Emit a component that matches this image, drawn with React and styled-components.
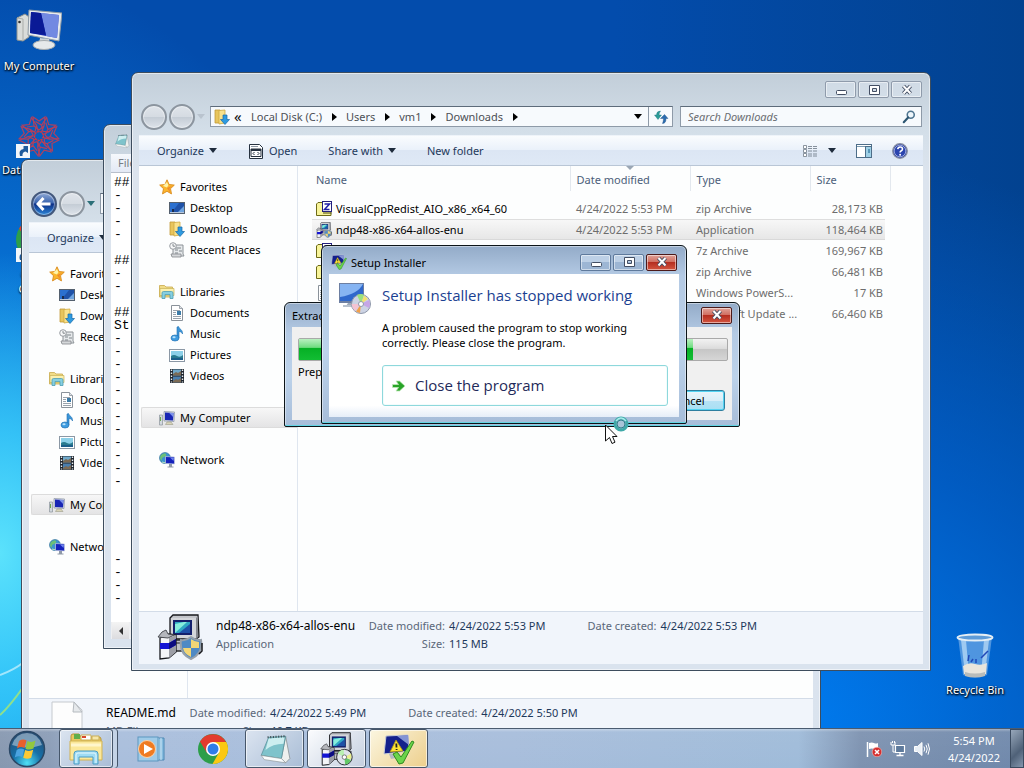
import React from "react";
import styled, { createGlobalStyle, css } from "styled-components";

const GlobalStyle = createGlobalStyle`
  * {
    box-sizing: border-box;
  }
  body {
    margin: 0;
    font-family: "Noto Sans", "Open Sans", sans-serif;
    font-size: 11px;
    line-height: 15px;
    color: #000;
  }
  button, input, textarea {
    font: inherit;
    color: inherit;
    margin: 0;
    padding: 0;
    border: 0;
    background: none;
  }
  a {
    color: inherit;
    text-decoration: none;
  }
  svg {
    display: block;
    flex: none;
  }
`;

/* ---------- icons ---------- */

const Svg = ({ size = 16, box = 16, children }) => (
  <svg width={size} height={size} viewBox={`0 0 ${box} ${box}`} aria-hidden="true">
    {children}
  </svg>
);

const StarIcon = () => (
  <Svg>
    <path d="M8 .8l2.1 4.7 5.2.6-3.8 3.6 1 5.2L8 12.300l-4.500 2.600 1-5.200L.7 6.100l5.200-.6z" fill="#fbb52d" stroke="#d98a1c" strokeWidth=".9" />
    <path d="M8 3l1.400 3.300L8 8.500 4 7z" fill="#fff3a8" />
    <path d="M8 9l5-2-2.500 2.600.7 3.800z" fill="#ee8a2a" />
  </Svg>
);

const ScreenIcon = () => (
  <Svg>
    <rect x="0" y="2" width="16" height="12" fill="#54606e" />
    <rect x="1" y="3" width="14" height="9" fill="#1f52a8" />
    <path d="M1 3h9L3 12H1z" fill="#2b70cf" />
    <path d="M9 12l6-6v6z" fill="#6ea4e0" />
    <rect x="1" y="12" width="14" height="1" fill="#b8c8dc" />
    <rect x="3" y="9" width="2" height="3" fill="#1c2c4c" />
  </Svg>
);

const DownloadsIcon = () => (
  <Svg>
    <path d="M1 1h5l1 13H1z" fill="#e8c55c" stroke="#c29b38" strokeWidth=".8" />
    <path d="M5 1.500l6-.500v13l-6 1z" fill="#f9e28c" stroke="#cfa943" strokeWidth=".8" />
    <path d="M9 6h4v4.500h2.500L11 15.500 6.500 10.500H9z" fill="#2f9be0" stroke="#1769a8" strokeWidth=".7" />
  </Svg>
);

const RecentIcon = () => (
  <Svg>
    <path d="M4 3h10v9l1 2H3l1-3z" fill="#e6e9eb" stroke="#8c9297" />
    <path d="M6 6h6M6 8h3M10 9h3M6 11h3" stroke="#7f868b" />
    <circle cx="4" cy="4" r="3.300" fill="#f6f7f8" stroke="#989da2" />
    <path d="M4 2v2.200h2" stroke="#6b7176" fill="none" strokeWidth=".8" />
    <path d="M2 12h10v3H3z" fill="#d5d8da" stroke="#85898d" strokeWidth=".8" />
  </Svg>
);

const LibrariesIcon = () => (
  <Svg>
    <path d="M.5 3V1.500h5L7 3h6.500v10H.5z" fill="#f1dc87" stroke="#c9a94c" strokeWidth=".8" />
    <path d="M1 4.500h14v7H1z" fill="#fbf0ae" stroke="#c9b158" strokeWidth=".7" />
    <path d="M3 14.500V9q0-1.500 1.500-1.500h8Q14 7.500 14 9v5.500h-3V10.500H6v4z" fill="#86cfe0" stroke="#4d9db4" strokeWidth=".8" />
  </Svg>
);

const DocumentIcon = () => (
  <Svg>
    <path d="M2.500.5h8l3 3v12h-11z" fill="#fff" stroke="#8a929a" />
    <path d="M10.500.5v3h3" fill="#dfe4e8" stroke="#8a929a" strokeWidth=".8" />
    <path d="M4 5.500h7M4 7.500h3M4 9.500h3M4 11.500h8M4 13.500h8" stroke="#9aa3ac" />
    <rect x="8" y="6" width="4" height="4" fill="#3c7ca8" />
  </Svg>
);

const MusicIcon = () => (
  <Svg>
    <path d="M8 1l1.500-.5c.5 2.500 4.500 3 4 7.500-.5-1.500-2-2.500-3.500-2.500V12H8z" fill="#3b95d8" stroke="#2273b5" strokeWidth=".6" />
    <ellipse cx="6" cy="12" rx="4" ry="3" fill="#3f9ce0" stroke="#2273b5" strokeWidth=".7" />
    <ellipse cx="5" cy="11.300" rx="1.600" ry="1" fill="#b8e2fa" />
  </Svg>
);

const PictureIcon = () => (
  <Svg>
    <rect x=".5" y="2.500" width="15" height="12" fill="#fff" stroke="#8b98a5" />
    <rect x="2" y="4" width="12" height="9" fill="#8cd0e8" />
    <path d="M2 9q3-2 6 0t6-1v5H2z" fill="#2a7b8f" />
    <path d="M2 11h12v2H2z" fill="#1c5f8a" />
  </Svg>
);

const VideoIcon = () => (
  <Svg>
    <rect x="1" y="1" width="14" height="14" fill="#20262e" />
    <rect x="4" y="1.500" width="8" height="6" fill="#6fa8c9" />
    <rect x="4" y="8.500" width="8" height="6" fill="#4b7fae" />
    <path d="M4 6l3-2 2 1 3-2v4.500H4zM4 13l3-2 2 1 3-2v4.500H4z" fill="#7c6b55" />
    <path d="M2.500 1.500v13M13.500 1.500v13" stroke="#e8eef2" strokeWidth="1.400" strokeDasharray="1.500 1.500" />
  </Svg>
);

const PcIcon = () => (
  <Svg>
    <path d="M.5 5h3v10h-3z" fill="#d2d8de" stroke="#8b939b" strokeWidth=".7" />
    <path d="M1.500 7v4" stroke="#6aa84a" />
    <path d="M5 1.500l10.500.5-.5 9.500-10-.500z" fill="#d8dde4" stroke="#8a94a3" strokeWidth=".7" />
    <path d="M6 2.500l8.500.500-.500 7.500-8-.500z" fill="#1826b4" />
    <path d="M10 2.700l4.500.3-.400 4z" fill="#7c92ea" />
    <path d="M8 12h4l2 2.500H6.500z" fill="#d9d5b8" stroke="#9a9a88" strokeWidth=".6" />
  </Svg>
);

const NetworkIcon = () => (
  <Svg>
    <circle cx="6" cy="6" r="5.500" fill="#3c93cf" stroke="#2a6c92" strokeWidth=".6" />
    <path d="M2 3q4-3 5-1T5 5 3 8 1 7q0-3 1-4z" fill="#6cc077" />
    <path d="M3 10l4 1" stroke="#bfe7c3" />
    <path d="M6.500 4.500l9 .5v7l-9-.5z" fill="#1522bc" stroke="#c6cfdf" strokeWidth=".7" />
    <path d="M11 5.500l4 .2-.5 3.300z" fill="#6f84ee" />
    <path d="M10 12h3v2.500h1.500v1h-6v-1H10z" fill="#8f99a8" />
  </Svg>
);

const ZipIcon = () => (
  <Svg>
    <path d="M.5 14.500V3l1.500-1.500h4L7.500 3H15v11.500z" fill="#f8f49a" stroke="#6d6a18" />
    <rect x="6.500" y=".5" width="9" height="10" fill="#fff" stroke="#22207c" />
    <path d="M8.500 3h5l-5 5.500h5" stroke="#1f1fa8" strokeWidth="1.500" fill="none" />
    <path d="M7 12h8.500" stroke="#4a4812" />
  </Svg>
);

// old style installer picture: computer, box and a disc or shield
const InstallerIcon = ({ size = 16, disc }) => (
  <Svg size={size} box={46}>
    <path d="M13 4l3-3h25l1 22-3 2H13z" fill="#c3c5ca" stroke="#17181c" strokeWidth="1.300" />
    <path d="M14 4h25v20H14z" fill="#d4d6da" />
    <path d="M39 4l2-2v21l-2 2z" fill="#85878e" />
    <rect x="16" y="6" width="19" height="15" fill="#14206c" />
    <path d="M18 8h15v11H18z" fill="#2fa8c4" />
    <path d="M18 19V10l9-2h3z" fill="#86eedc" />
    <path d="M33 10v9H22z" fill="#1f50a8" />
    <path d="M15 26h27v11H15z" fill="#bfc1c7" stroke="#2b2c31" strokeWidth="1.300" />
    <path d="M17 29h12" stroke="#6b6d74" strokeWidth="2" />
    <path d="M3 24l9-4 7 1v17l-7 6-9 1z" fill="#f4f5f8" stroke="#17181c" strokeWidth="1.300" />
    <path d="M12 24l7-3v17l-7 6z" fill="#9c9ea6" />
    <path d="M3 29h9l7-4v6l-7 4H3z" fill="#1414d4" />
    <path d="M12 29l7-4v6l-7 4z" fill="#0c0c80" />
    <path d="M1 23l4-5 4-2 2 4 6 1-6 3z" fill="#b4b6bc" stroke="#4c4e54" />
    {disc ? (
      <g>
        <circle cx="33" cy="34" r="10.500" fill="#dfe2ea" stroke="#26282c" strokeWidth="1.300" />
        <path d="M33 34l-9-5q3-5 8-5z" fill="#b9f0b1" />
        <path d="M33 34l9 4q-3 6-8 6z" fill="#62c766" />
        <path d="M33 34l9-5q1 4 0 8z" fill="#eaf08c" />
        <circle cx="33" cy="34" r="3" fill="#fff" stroke="#555" />
      </g>
    ) : (
      <g>
        <path d="M34 23q5 4 10 3 2 14-10 19-12-5-10-19 5 1 10-3z" fill="#4f8ac4" stroke="#97a1ab" strokeWidth="2" />
        <path d="M34 25q4 3 8 3v6h-8zM34 34v9q-7-3-8-9z" fill="#f3d675" />
        <path d="M45 29v8l-3 3" stroke="#17181c" strokeWidth="1.500" fill="none" />
      </g>
    )}
  </Svg>
);

const OpenIcon = () => (
  <Svg>
    <path d="M1.500 1.500h10l3 3v11h-13z" fill="#fff" stroke="#26313f" />
    <path d="M3 3.500h7" stroke="#8d97a4" />
    <path d="M3 6h10v7.500H3z" fill="#fff" stroke="#26313f" />
    <path d="M3 6h10v2H3z" fill="#26313f" />
    <path d="M6.500 9L5 10.500 6.500 12M9.500 9l1.500 1.500L9.500 12" stroke="#26313f" fill="none" />
  </Svg>
);

const ViewIcon = () => (
  <Svg>
    <path d="M1.500 2.500h3v3h-3zM1.500 6.500h3v3h-3zM1.500 10.500h3v3h-3z" fill="#fff" stroke="#707b88" strokeWidth=".8" />
    <path d="M6 3.500h10M6 5.500h10M6 8h10M6 11h10M6 13h10" stroke="#6b7684" strokeDasharray="4 1" strokeWidth=".8" />
  </Svg>
);

const PaneIcon = () => (
  <Svg>
    <rect x=".5" y="1.500" width="15" height="13" fill="#fff" stroke="#4d6d88" />
    <path d="M1 3.500h14" stroke="#7b9ab0" />
    <rect x="9.500" y="3.500" width="6" height="11" fill="#9fd0e6" stroke="#4d6d88" />
    <path d="M12 6h2v4h-2z" fill="#5796b8" />
  </Svg>
);

const HelpIcon = () => (
  <Svg>
    <circle cx="8" cy="8" r="7.300" fill="#2b44ae" stroke="#8a90a0" strokeWidth="1.300" />
    <circle cx="8" cy="8" r="5.800" fill="none" stroke="#c5cfec" strokeWidth=".7" />
    <path d="M5.700 6.200Q6 4 8.200 4t2.300 2Q10.500 7.200 9 8q-.9.500-.9 1.500" stroke="#fff" strokeWidth="1.600" fill="none" />
    <circle cx="8.100" cy="11.700" r="1" fill="#fff" />
  </Svg>
);

const SearchIcon = () => (
  <Svg size={14}>
    <circle cx="10" cy="5.500" r="4" fill="#eef6fb" stroke="#4f7590" strokeWidth="1.800" />
    <path d="M7 8.500L2 14" stroke="#2d5672" strokeWidth="2.400" strokeLinecap="round" />
  </Svg>
);

const RefreshIcon = () => (
  <Svg>
    <path d="M7.500 2Q3.500 2 3.500 6H1.500L5 10.500 8.500 6H6q0-2 1.500-4z" fill="#2b9d96" stroke="#1b6c86" strokeWidth=".4" />
    <path d="M9.500 14.500q3.500 0 3.500-5h2L11.500 5.500 7.500 9.500h3q0 3-1 5z" fill="#2a6cae" stroke="#1b4c86" strokeWidth=".4" />
  </Svg>
);

const NotepadIcon = ({ size = 16 }) => (
  <Svg size={size} box={32}>
    <path d="M26 4l4 21-4 4-4-4z" fill="#eef0ee" stroke="#8c9698" strokeWidth=".8" />
    <path d="M10 5l16-1-4 21-19-3z" fill="#7fc3cb" stroke="#568f98" strokeWidth=".7" />
    <path d="M10 6l15-1-1 6Q14 11 7 17z" fill="#cdeef0" />
    <path d="M9 5l17-1" stroke="#3f4c52" strokeWidth="2" strokeDasharray="1 1.500" />
    <path d="M3 22l19 3 4 4-20-3z" fill="#fafcfc" stroke="#8a9496" strokeWidth=".6" />
  </Svg>
);

const BlankFileIcon = () => (
  <Svg size={40} box={40}>
    <path d="M5 1h22l8 8v30H5z" fill="#fdfdfd" stroke="#c5c9ce" />
    <path d="M27 1l-1 10h9z" fill="#e6e9ec" stroke="#b5babf" />
  </Svg>
);

const SetupIcon = ({ size = 16 }) => (
  <Svg size={size} box={32}>
    <path d="M3 3l22-1 1 16-25 3z" fill="#14208c" stroke="#c6cbd6" strokeWidth="1" />
    <path d="M14 3l11-1 1 10z" fill="#8494d4" />
    <path d="M6 21l10-1 2 4-10 2z" fill="#b4b8c0" />
    <path d="M13 7l7 11-13 1z" fill="#fde334" stroke="#a58b12" strokeWidth=".8" />
    <path d="M13.300 10.500l.2 4M13.600 16v1" stroke="#222" strokeWidth="1.800" />
    <path d="M10 21l4-2 4 5L29 8l2 1-11 21-4 1z" fill="#6bd44a" stroke="#2e8a20" />
  </Svg>
);

const SetupDiscIcon = () => (
  <Svg size={34} box={34}>
    <rect x="1" y="1" width="25" height="20" fill="#6d7fa2" />
    <rect x="2" y="2" width="23" height="17" fill="#2f68cc" />
    <path d="M2 2h23Q20 12 2 15z" fill="#86b4f2" />
    <path d="M10 21h7l1 3H8z" fill="#9da8b8" />
    <path d="M5 24h15" stroke="#b9c2ce" strokeWidth="2" />
    <circle cx="23" cy="22" r="9.500" fill="#ccd3e4" stroke="#8f98aa" />
    <path d="M23 22l-4-9q4-2 7 0z" fill="#9ae07f" />
    <path d="M23 22l8-4q2 4 0 8z" fill="#c6a6e6" />
    <path d="M23 22l3-8.500 4 3.500z" fill="#f3e270" />
    <path d="M23 22l-6 7q-3-3-3.500-7z" fill="#f4c3d2" />
    <path d="M23 22l-5 7.500 4 1.500z" fill="#f2a04a" />
    <circle cx="23" cy="22" r="2.500" fill="#fff" stroke="#8f98aa" />
  </Svg>
);

const GreenArrowIcon = () => (
  <Svg>
    <path d="M1.500 6.500h6L5 3h3.500L14 8l-5.500 5H5l2.500-3.500h-6z" fill="#28a428" stroke="#bfe9b8" strokeWidth=".8" />
  </Svg>
);

const ComputerBig = () => (
  <Svg size={46} box={46}>
    <path d="M1 9l8-4 4 3v20l-6 4-6-1z" fill="#d9dcda" stroke="#90938f" />
    <path d="M1 9l6 1v22" fill="none" stroke="#a9aca9" />
    <circle cx="3.500" cy="13" r="1.300" fill="#333" />
    <path d="M13 1l33 3-3 28-31-6z" fill="#e7ebee" stroke="#8e9aa5" />
    <path d="M15 3l28 3-2 23-27-5z" fill="#1327b4" />
    <path d="M25 4l18 2-2 23-11-2z" fill="#8ba3ee" opacity=".8" />
    <path d="M15 3l10 1 5 22-16-2z" fill="#0a1a96" />
    <path d="M24 29l9 1 1 5H23z" fill="#cdd3d6" />
    <ellipse cx="28" cy="36" rx="11" ry="4.500" fill="#e6e9ea" stroke="#a4aaad" />
  </Svg>
);

const Rosette = () => (
  <Svg size={46} box={46}>
    <g fill="none" stroke="#b0405e" strokeWidth="1.200">
      {[0, 40, 80, 120, 160, 200, 240, 280, 320].map((a) => (
        <path key={a} d="M23 17l-5-4-1-9 6 4 6-4-1 9-5 4M18 13l-7 1M28 13l-3 7" transform={`rotate(${a} 23 23)`} />
      ))}
      <circle cx="23" cy="23" r="4.500" strokeDasharray="2 1" stroke="#e03038" />
    </g>
  </Svg>
);

const ShortcutIcon = () => (
  <Svg size={14} box={14}>
    <rect width="14" height="14" fill="#f2f6fa" />
    <path d="M4 12Q2 6 7.500 5V2H12v7L9.500 7.500Q6 8 6.500 12z" fill="#1f5b9c" />
  </Svg>
);

const RecycleIcon = () => (
  <Svg size={48} box={48}>
    <path d="M7 5h34l-5 38q-12 5-24 0z" fill="#6aa6e4" opacity=".75" />
    <path d="M10 8l4 34 4 1-3-35zM38 8l-4 34-4 1 3-35z" fill="#d6ecfb" opacity=".6" />
    <path d="M12 34q6-4 12-2t12-1l-1 11q-11 4-22 0z" fill="#e9e5dc" />
    <path d="M14 40q10 3 20 0v4q-10 3-20 0z" fill="#b9bcba" />
    <path d="M17 29l1-6M20 30l2-3M25 31v-4M30 26l7-7" stroke="#2148b8" strokeWidth="1.500" fill="none" />
    <ellipse cx="24" cy="5.500" rx="17.500" ry="3" fill="#5d9bd8" stroke="#e4eef5" strokeWidth="1.800" />
  </Svg>
);

const StartOrb = () => (
  <Svg size={38} box={38}>
    <defs>
      <radialGradient id="orb" cx=".5" cy=".9" r=".9">
        <stop offset="0" stopColor="#4fe0f5" />
        <stop offset=".45" stopColor="#1670a8" />
        <stop offset="1" stopColor="#264a70" />
      </radialGradient>
    </defs>
    <circle cx="19" cy="19" r="17.500" fill="url(#orb)" stroke="#2a4866" strokeWidth="1.500" />
    <path d="M4 15Q8 3 19 3t15 12Q19 20 4 15z" fill="#b6cbdc" opacity=".6" />
    <path d="M11 11q4-2.500 7.500-.500l-2 7.500q-3.500-2-7.500.500z" fill="#e9602c" />
    <path d="M19.500 11q4 2 8-.500l-2 8q-4 2-8 .200z" fill="#93c83e" />
    <path d="M8.700 20q4-2.500 7.500-.500l-2 7.500q-3.500-1.800-7.500.500z" fill="#4ba3e0" />
    <path d="M17.200 20q4 2 8-.200l-2 8q-4 2-8 0z" fill="#fbc936" />
  </Svg>
);

const FolderBig = () => (
  <Svg size={34} box={34}>
    <path d="M2 4q0-2 2-2h6l2 3h18q2 0 2 2v20H2z" fill="#e8c860" stroke="#b99535" />
    <path d="M5 2h6v5H5z" fill="#5fae4a" />
    <path d="M12 3h10v5H12z" fill="#fff" stroke="#c9ae58" />
    <path d="M13 4h4v2h-4z" fill="#d8482e" />
    <path d="M23 4h7v4h-7z" fill="#f6e7a8" stroke="#c9ae58" />
    <path d="M1 9h32v19H1z" fill="#fbe89a" stroke="#d2b352" />
    <path d="M2 13h30" stroke="#fff6cc" strokeWidth="3" />
    <path d="M5 32V22q0-3 3-3h18q3 0 3 3v10h-5v-7H10v7z" fill="#9fdcf4" stroke="#4a9cc4" />
    <path d="M7 31v-8q0-2 2-2h16q2 0 2 2v8" fill="none" stroke="#e4f7fd" />
  </Svg>
);

const PlayerIcon = () => (
  <Svg size={28} box={28}>
    <path d="M19 3h8v22h-8z" fill="#86bcdf" stroke="#4d88b4" />
    <path d="M21 3v22M24 3v22" stroke="#d0e8f6" />
    <rect x="1" y="2" width="20" height="24" fill="#9fcbe8" stroke="#5d97bf" />
    <circle cx="10" cy="14" r="8.500" fill="#ef7b22" stroke="#fbd2a8" />
    <path d="M7 9l9 5-9 5z" fill="#fff" />
  </Svg>
);

const ChromeIcon = ({ size = 30 }) => (
  <Svg size={size} box={30}>
    <circle cx="15" cy="15" r="15" fill="#2d9e49" />
    <path d="M2 7.500A15 15 0 0 1 28 8H15l-6 11z" fill="#e23b2e" />
    <path d="M15 8h13.300A15 15 0 0 1 14.500 30L21 18.500z" fill="#fbc813" />
    <circle cx="15" cy="15" r="7" fill="#fff" />
    <circle cx="15" cy="15" r="5.500" fill="#2f7de8" />
  </Svg>
);

const FlagIcon = () => (
  <Svg>
    <path d="M1.500 1v15" stroke="#fff" strokeWidth="1.500" />
    <path d="M3 2q3-1 5 0t4 0v6q-2 1-4 0t-5 0z" fill="#fff" />
    <circle cx="11" cy="11" r="4.800" fill="#d62f2f" stroke="#f3c5c0" strokeWidth=".6" />
    <path d="M9 9l4 4M13 9l-4 4" stroke="#fff" strokeWidth="1.500" />
  </Svg>
);

const WiredIcon = () => (
  <Svg>
    <path d="M5.500 4.500h9v7h-9z" fill="#5e7a9c" stroke="#fff" strokeWidth="1.200" />
    <path d="M10 12v2M6.500 14.500h7" stroke="#fff" strokeWidth="1.300" />
    <path d="M1 1v3h4V1M3 4v7h2M2.500 0v2M4.500 0v2" stroke="#fff" fill="none" />
  </Svg>
);

const SpeakerIcon = () => (
  <Svg>
    <path d="M.5 5.500h3L8 1.500v13l-4.500-4h-3z" fill="#e8eef5" stroke="#fff" />
    <path d="M10 5.500q1.500 2.500 0 5M12 3.800q2.500 4.200 0 8.400M14 2.300q3 5.700 0 11.400" stroke="#fff" fill="none" />
  </Svg>
);

const MinGlyph = () => (
  <Svg size={12} box={12}>
    <rect x="1.500" y="6.500" width="10" height="4" rx="1" fill="#fff" stroke="#434e63" />
  </Svg>
);

const MaxGlyph = () => (
  <Svg size={12} box={12}>
    <path fillRule="evenodd" d="M1.500 1.500h10v9h-10zM4.500 4.500v3h4v-3z" fill="#fff" stroke="#434e63" />
  </Svg>
);

const CloseGlyph = () => (
  <Svg size={12} box={12}>
    <path d="M2.500 2l7 7.500M9.500 2l-7 7.500" stroke="#434e63" strokeWidth="4" />
    <path d="M2.500 2l7 7.500M9.500 2l-7 7.500" stroke="#fff" strokeWidth="2" />
  </Svg>
);

/* ---------- desktop ---------- */

const Screen = styled.div`
  display: flex;
  flex-direction: column;
  height: 100vh;
  overflow: hidden;
`;

const Desktop = styled.main`
  position: relative;
  flex: 1;
  overflow: hidden;
  background:
    radial-gradient(ellipse 180px 300px at 0 76%, #5be2fc 0, rgba(60, 204, 250, 0.85) 40%, transparent 100%),
    radial-gradient(ellipse 420px 680px at 0 90%, #10aaf4 0, rgba(8, 130, 230, 0.75) 50%, transparent 100%),
    radial-gradient(ellipse 640px 580px at 76% 100%, #007cf0 0, rgba(0, 104, 218, 0.65) 50%, transparent 100%),
    linear-gradient(90deg, #034cac, #034cac 60%, #024290);
`;

const Streaks = styled.svg`
  position: absolute;
  left: 0;
  bottom: 0;
`;

const Shortcut = styled.a`
  position: absolute;
  left: ${(p) => p.$x}px;
  top: ${(p) => p.$y}px;
  width: 76px;
  display: flex;
  flex-direction: column;
  align-items: center;
  gap: 2px;
  color: #fff;
  text-align: center;
  text-shadow: 1px 1px 2px #000, 0 1px 2px #000;
`;

const ShortcutPicture = styled.span`
  display: flex;
  align-items: center;
  height: 48px;
`;

const ShortcutArrow = styled.span`
  position: absolute;
  left: 15px;
  top: 32px;
`;

/* ---------- windows ---------- */

const Window = styled.section`
  position: absolute;
  left: ${(p) => p.$x}px;
  top: ${(p) => p.$y}px;
  width: ${(p) => p.$w}px;
  height: ${(p) => p.$h}px;
  display: flex;
  flex-direction: column;
  padding: 0 7px 6px;
  border: 1px solid #3d4d5e;
  border-radius: 7px 7px 0 0;
  background: linear-gradient(180deg, #c2ced9 0, #d4dfe9 60px, #dce4ee 100px, #dae3ee 100%);
  box-shadow: inset 0 0 0 1px rgba(255, 255, 255, 0.55);
`;

const Dialog = styled(Window)`
  border-color: #0c1418;
  border-radius: 6px 6px 2px 2px;
  background: linear-gradient(180deg, #93abc8 0, #b4cae4 30px, #bcd2ea 60%, #a7bdd9 100%);
  box-shadow: inset 0 -1px 0 #62d5e4, inset 0 0 0 1px rgba(255, 255, 255, 0.45);
`;

const CaptionButtons = styled.div`
  display: flex;
  gap: 2px;
  margin-left: auto;
`;

const CaptionButton = styled.button`
  width: 31px;
  height: 17px;
  display: flex;
  align-items: center;
  justify-content: center;
  border: 1px solid ${(p) => (p.$active ? "#5f7a9c" : "#8f9bab")};
  border-radius: 2px;
  background: ${(p) => (p.$active ? "linear-gradient(#bdd0e6 50%, #9db6d4 50%)" : "rgba(225, 234, 244, 0.4)")};
  box-shadow: inset 0 0 0 1px rgba(255, 255, 255, 0.5);
  ${(p) =>
    p.$red &&
    css`
      border-color: #4c1a1a;
      background: linear-gradient(#e0a298 0, #cf6a5c 50%, #b52e20 50%, #d4553f 100%);
    `}
`;

const Caption = ({ active, only }) => (
  <CaptionButtons>
    {!only && (
      <CaptionButton type="button" aria-label="Minimize" $active={active}>
        <MinGlyph />
      </CaptionButton>
    )}
    {!only && (
      <CaptionButton type="button" aria-label="Maximize" $active={active}>
        <MaxGlyph />
      </CaptionButton>
    )}
    <CaptionButton type="button" aria-label="Close" $active={active} $red={active || only}>
      <CloseGlyph />
    </CaptionButton>
  </CaptionButtons>
);

/* ---------- explorer ---------- */

const ExplorerTitle = styled.header`
  display: flex;
  height: 33px;
  padding: 8px 1px 0 0;
`;

const NavBar = styled.div`
  display: flex;
  align-items: center;
  height: 21px;
  margin-bottom: 8px;
`;

const TravelButtons = styled.div`
  display: flex;
  align-items: center;
  gap: 2px;
  width: 71px;
  padding-left: 2px;
`;

const TravelButton = styled.button`
  width: 26px;
  height: 26px;
  flex: none;
  display: flex;
  align-items: center;
  justify-content: center;
  border: 2px solid ${(p) => (p.$on ? "#43587c" : "#8c959f")};
  border-radius: 50%;
  background: ${(p) =>
    p.$on ? "linear-gradient(#8fa9d6 0, #3a64ae 45%, #0c2f86 50%, #2c86d8 100%)" : "linear-gradient(#dfe4ea 0, #d5dbe2 50%, #c4ccd5 50%, #dde3ea 100%)"};
  box-shadow: inset 0 0 0 1px rgba(255, 255, 255, 0.4);
`;

const Triangle = styled.span`
  width: 0;
  height: 0;
  flex: none;
  border: 4px solid transparent;
  ${(p) =>
    p.$right
      ? css`
          border-left: 5px solid #000;
          border-right: 0;
        `
      : css`
          border-top: 5px solid ${p.$color || "#1e2b3c"};
          border-bottom: 0;
        `}
`;

const AddressBar = styled.div`
  flex: 1;
  display: flex;
  align-items: center;
  height: 21px;
  padding-left: 3px;
  border: 1px solid #8e9aa8;
  border-top-color: #5d6b7a;
  background: #f7fafd;
  color: #4c4f55;
`;

const Crumb = styled.a`
  display: flex;
  align-items: center;
  gap: 10px;
  margin-right: 9px;
  white-space: nowrap;
`;

const Chevrons = styled.span`
  width: 21px;
  padding-left: 4px;
  color: #111;
  font-size: 15px;
`;

const AddressEnd = styled.div`
  display: flex;
  align-items: center;
  gap: 6px;
  height: 100%;
  margin-left: auto;
`;

const RefreshButton = styled.button`
  width: 24px;
  height: 100%;
  display: flex;
  align-items: center;
  justify-content: center;
  border-left: 1px solid #8e9aa8;
`;

const SearchBox = styled.label`
  display: flex;
  align-items: center;
  width: 242px;
  height: 21px;
  margin: 0 1px 0 7px;
  padding: 0 5px 0 7px;
  border: 1px solid #8e9aa8;
  border-top-color: #5d6b7a;
  background: #f7fafd;

  input {
    flex: 1;
    min-width: 0;
    font-style: italic;
    outline: none;
  }
  input::placeholder {
    color: #6a6d72;
    opacity: 1;
  }
`;

const Toolbar = styled.div`
  display: flex;
  align-items: center;
  height: 31px;
  padding: 0 15px 0 18px;
  border: 1px solid #b9c6d6;
  border-width: 1px 0;
  border-top-color: #eef3f9;
  background: linear-gradient(#fafcfe 0, #eaf1fa 48%, #dce6f4 50%, #dfe9f6 100%);
  color: #1e395b;
`;

const ToolButton = styled.button`
  display: flex;
  align-items: center;
  gap: 5px;
  margin-right: 31px;
  white-space: nowrap;
`;

const ToolEnd = styled.div`
  display: flex;
  align-items: center;
  gap: 20px;
  margin-left: auto;
`;

const ViewButton = styled.button`
  display: flex;
  align-items: center;
  gap: 10px;
`;

const Body = styled.div`
  flex: 1;
  min-height: 0;
  display: flex;
  background: #fdfefe;
`;

const NavPane = styled.nav`
  width: 159px;
  padding: 10px 0 0 2px;
  border-right: 1px solid #dfe6ef;
`;

const NavItem = styled.a`
  display: flex;
  align-items: center;
  gap: 5px;
  height: 21px;
  margin-bottom: ${(p) => (p.$last ? 21 : 0)}px;
  padding-left: ${(p) => (p.$child ? 27 : 17)}px;
  white-space: nowrap;
  border: 1px solid transparent;
  border-right: 0;
  ${(p) =>
    p.$selected &&
    css`
      border-color: #dcdcdc;
      border-radius: 2px 0 0 2px;
      background: linear-gradient(#f7f7f7, #e4e4e5);
    `}
`;

const ListPane = styled.div`
  flex: 1;
  padding-left: 14px;
  overflow: hidden;
`;

const FileTable = styled.table`
  width: 578px;
  table-layout: fixed;
  border-collapse: collapse;

  th, td {
    padding: 0 6px;
    font-weight: 400;
    text-align: left;
    white-space: nowrap;
    color: #6d6d6d;
  }
  th {
    height: 25px;
    padding-top: 2px;
    border-right: 1px solid #e3e8ee;
    color: #4c607a;
  }
  th:first-child, td:first-child {
    padding-left: 4px;
  }
  td {
    height: 21px;
  }
  td:last-child {
    padding: 0;
  }
  td:nth-child(4) {
    padding: 0 2px 0 0;
    text-align: right;
  }
  tbody::before {
    content: "";
    display: block;
    height: 7px;
  }
`;

const FileRow = styled.tr`
  ${(p) =>
    p.$selected &&
    css`
      td:not(:last-child) {
        background: linear-gradient(#f8f8f8, #e6e6e6);
        box-shadow: inset 0 1px 0 #dedede, inset 0 -1px 0 #d9d9d9;
      }
    `}
`;

const SortHead = styled.th`
  position: relative;

  &::after {
    content: "";
    position: absolute;
    left: 50%;
    top: 0;
    margin-left: -4px;
    border: 4px solid transparent;
    border-top-color: #9aa6b4;
    border-bottom: 0;
  }
`;

const FileName = styled.span`
  display: flex;
  align-items: center;
  gap: 4px;
  color: #000;
`;

const Details = styled.footer`
  display: flex;
  height: 53px;
  padding: 2px 0 0 18px;
  border-top: 1px solid #d3dce8;
  background: #f1f5fb;
`;

const DetailsIcon = styled.div`
  width: 59px;
`;

const DetailsGrid = styled.dl`
  display: grid;
  grid-template-columns: auto auto auto;
  grid-template-rows: 18px 18px;
  align-items: center;
  align-self: start;
  column-gap: 10px;
  margin: 2px 0 0;
  white-space: nowrap;
`;

const Pair = styled.div`
  display: grid;
  grid-template-columns: ${(p) => p.$label}px auto;
  gap: 4px;
  margin-right: ${(p) => p.$after || 0}px;

  dt {
    text-align: right;
    color: #5a6779;
  }
  dd {
    margin: 0;
    color: #1e395b;
  }
`;

const DetailsName = styled.dt`
  font-size: 12px;
`;

const DetailsKind = styled.dd`
  margin: 0;
  color: #5a6779;
`;

const navItems = [
  { name: "Favorites", icon: StarIcon },
  { name: "Desktop", icon: ScreenIcon, child: true },
  { name: "Downloads", icon: DownloadsIcon, child: true },
  { name: "Recent Places", icon: RecentIcon, child: true, last: true },
  { name: "Libraries", icon: LibrariesIcon },
  { name: "Documents", icon: DocumentIcon, child: true },
  { name: "Music", icon: MusicIcon, child: true },
  { name: "Pictures", icon: PictureIcon, child: true },
  { name: "Videos", icon: VideoIcon, child: true, last: true },
  { name: "My Computer", icon: PcIcon, selected: true, last: true },
  { name: "Network", icon: NetworkIcon },
];

const files = [
  { name: "VisualCppRedist_AIO_x86_x64_60", type: "zip Archive", size: "28,173 KB", icon: ZipIcon },
  { name: "ndp48-x86-x64-allos-enu", type: "Application", size: "118,464 KB", icon: InstallerIcon, selected: true },
  { name: "", type: "7z Archive", size: "169,967 KB", icon: ZipIcon },
  { name: "", type: "zip Archive", size: "66,481 KB", icon: ZipIcon },
  { name: "", type: "Windows PowerS...", size: "17 KB", icon: DocumentIcon },
  { name: "", type: "Microsoft Update ...", size: "66,460 KB", icon: DocumentIcon },
];

const Explorer = ({ x, y, canGoBack, path, search, rows = [], details }) => (
  <Window $x={x} $y={y} $w={800} $h={599}>
    <ExplorerTitle>
      <Caption />
    </ExplorerTitle>
    <NavBar>
      <TravelButtons>
        <TravelButton type="button" aria-label="Back" $on={canGoBack}>
          {canGoBack && (
            <Svg>
              <path d="M7.500 2L2 8l5.500 6M2 8h12.500" stroke="#fff" strokeWidth="3" fill="none" />
            </Svg>
          )}
        </TravelButton>
        <TravelButton type="button" aria-label="Forward" />
        <Triangle $color={canGoBack ? "#2c6f78" : "#b9c3ce"} />
      </TravelButtons>
      <AddressBar>
        <DownloadsIcon />
        <Chevrons>«</Chevrons>
        {path.map((p) => (
          <Crumb href="#" key={p}>
            {p}
            <Triangle $right />
          </Crumb>
        ))}
        <AddressEnd>
          <Triangle $color="#000" />
          <RefreshButton type="button" aria-label="Refresh">
            <RefreshIcon />
          </RefreshButton>
        </AddressEnd>
      </AddressBar>
      <SearchBox>
        <input type="text" placeholder={search} aria-label={search} />
        <SearchIcon />
      </SearchBox>
    </NavBar>
    <Toolbar>
      <ToolButton type="button">
        Organize <Triangle />
      </ToolButton>
      <ToolButton type="button">
        <OpenIcon /> Open
      </ToolButton>
      <ToolButton type="button">
        Share with <Triangle />
      </ToolButton>
      <ToolButton type="button">New folder</ToolButton>
      <ToolEnd>
        <ViewButton type="button" aria-label="Change your view">
          <ViewIcon />
          <Triangle />
        </ViewButton>
        <button type="button" aria-label="Show the preview pane">
          <PaneIcon />
        </button>
        <button type="button" aria-label="Help">
          <HelpIcon />
        </button>
      </ToolEnd>
    </Toolbar>
    <Body>
      <NavPane>
        {navItems.map(({ name, icon: Icon, child, last, selected }) => (
          <NavItem href="#" key={name} $child={child} $last={last} $selected={selected}>
            <Icon /> {name}
          </NavItem>
        ))}
      </NavPane>
      <ListPane>
        {rows.length > 0 && (
          <FileTable>
            <colgroup>
              <col width="258" />
              <col width="120" />
              <col width="120" />
              <col width="75" />
              <col width="5" />
            </colgroup>
            <thead>
              <tr>
                <th>Name</th>
                <SortHead>Date modified</SortHead>
                <th>Type</th>
                <th colSpan="2">Size</th>
              </tr>
            </thead>
            <tbody>
              {rows.map(({ name, type, size, icon: Icon, selected }) => (
                <FileRow key={type + size} $selected={selected}>
                  <td>
                    <FileName>
                      <Icon /> {name}
                    </FileName>
                  </td>
                  <td>4/24/2022 5:53 PM</td>
                  <td>{type}</td>
                  <td>{size}</td>
                  <td />
                </FileRow>
              ))}
            </tbody>
          </FileTable>
        )}
      </ListPane>
    </Body>
    <Details>
      <DetailsIcon>{details.icon}</DetailsIcon>
      <DetailsGrid>
        <DetailsName>{details.name}</DetailsName>
        <Pair $label={80} $after={32}>
          <dt>Date modified:</dt>
          <dd>{details.modified}</dd>
        </Pair>
        <Pair $label={69}>
          <dt>Date created:</dt>
          <dd>{details.created}</dd>
        </Pair>
        <DetailsKind>{details.kind}</DetailsKind>
        <Pair $label={80}>
          <dt>Size:</dt>
          <dd>{details.size}</dd>
        </Pair>
      </DetailsGrid>
    </Details>
  </Window>
);

/* ---------- notepad ---------- */

const NoteTitle = styled.header`
  height: 29px;
  padding: 8px 3px 0;
`;

const NoteMenu = styled.div`
  height: 19px;
  padding: 1px 7px;
  background: linear-gradient(#f5f8fc, #e3e9f5);
  border-bottom: 1px solid #b8bfcb;
  color: #777c84;
`;

const NoteText = styled.textarea`
  flex: 1;
  padding: 3px 3px 0;
  background: #fff;
  font-family: "Liberation Mono", monospace;
  font-size: 13px;
  line-height: 13px;
  resize: none;
  outline: none;
  overflow: hidden;
`;

const NoteScroll = styled.div`
  height: 17px;
  margin-bottom: 3px;
  padding-left: 1px;
  background: #eeeff1;

  button {
    width: 17px;
    height: 17px;
    display: flex;
    align-items: center;
    justify-content: center;
    background: linear-gradient(#f4f4f4, #dcdcdf);
  }
`;

const noteLines = [
  "##", "-", "-", "-", "-", "",
  "##", "-", "-", "",
  "##", "St", ...Array(12).fill("-"),
  "", "", "", "", "",
  "-", "-", "-", "-",
];

/* ---------- dialogs ---------- */

const DialogTitle = styled.header`
  display: flex;
  align-items: center;
  gap: 4px;
  height: ${(p) => p.$h}px;
  padding: ${(p) => (p.$icon ? "4px 2px 0" : "0")};
`;

const ExtractBody = styled.div`
  flex: 1;
  display: flex;
  flex-direction: column;
  gap: 3px;
  padding: 11px 4px 9px 6px;
  background: #f0f0f0;
`;

const Progress = styled.div`
  height: 23px;
  border: 1px solid #a9a9a9;
  border-radius: 2px;
  background: linear-gradient(#f2f2f2 0, #dcdcdc 45%, #c6c6c6 50%, #d6d6d6 100%);
`;

const ProgressFill = styled.div`
  height: 100%;
  background: linear-gradient(#b9f0c0 0, #6fdc80 40%, #06b025 45%, #12bd33 100%);
`;

const CancelButton = styled.button`
  width: 75px;
  height: 21px;
  margin: auto 3px 0 auto;
  border: 1px solid #2f7f9f;
  border-radius: 3px;
  background: linear-gradient(#eaf5fb 0, #d9eef8 50%, #b7e2f5 50%, #a8e0f4 100%);
  box-shadow: inset 0 0 0 1px #55d3f2;
`;

const CrashBody = styled.div`
  flex: 1;
  display: grid;
  grid-template-columns: 34px 1fr;
  column-gap: 10px;
  padding: 8px 11px 11px 9px;
  background: linear-gradient(#fff 92%, #e6eef8);
`;

const CrashContent = styled.div`
  display: flex;
  flex-direction: column;
  align-items: flex-start;

  h1 {
    margin: 2px 0 14px;
    font-family: "Open Sans", sans-serif;
    font-size: 15px;
    line-height: 22px;
    font-weight: 400;
    color: #1b3f92;
    white-space: nowrap;
  }
  p {
    margin: 0 0 15px;
    width: 264px;
  }
`;

const CommandLink = styled.button`
  display: flex;
  align-items: center;
  gap: 8px;
  width: 100%;
  height: 41px;
  padding-left: 8px;
  border: 1px solid #8ed8dc;
  border-radius: 3px;
  background: #fff;
  color: #1f2a5a;
  font-family: "Open Sans", sans-serif;
  font-size: 15px;
  box-shadow: inset 0 0 0 1px #f2fcfc;
`;

const Pointer = styled.svg`
  position: absolute;
  left: 604px;
  top: 415px;
  pointer-events: none;
`;

/* ---------- taskbar ---------- */

const Taskbar = styled.footer`
  flex: none;
  display: flex;
  align-items: center;
  height: 40px;
  border-top: 1px solid #4a5b70;
  background:
    linear-gradient(rgba(255, 255, 255, 0.35) 0, rgba(255, 255, 255, 0.05) 3px, transparent),
    linear-gradient(90deg, #8798b0 0, #8b9db7 50px, #a9bedc 120px, #a7bddb 50%, #9fbbd9 78%, #7d92b0 84%, #6f88ab 100%);
`;

const StartButton = styled.button`
  width: 59px;
  padding-left: 8px;
`;

const Tasks = styled.div`
  display: flex;
  gap: 3px;
  height: 100%;
`;

const Task = styled.button`
  width: 59px;
  display: flex;
  align-items: center;
  justify-content: center;
  border: 1px solid transparent;
  ${(p) =>
    p.$open &&
    css`
      border-color: #46566a;
      border-radius: 3px;
      background: linear-gradient(135deg, #dbe4f0, #a9bdd6);
      box-shadow: inset 0 0 0 1px rgba(255, 255, 255, 0.6);
    `}
  ${(p) =>
    p.$stack &&
    css`
      width: 54px;
      margin-right: 5px;
      box-shadow: inset 0 0 0 1px rgba(255, 255, 255, 0.6), 4px 0 0 0 #c4d3e6, 5px 0 0 0 #46566a;
    `}
  ${(p) => p.$bright && "background: linear-gradient(135deg, #fbfcfe, #c4cfdf);"}
  ${(p) => p.$alert && "background: linear-gradient(135deg, #fbf6e0, #edcf8c);"}
`;

const Tray = styled.div`
  display: flex;
  align-items: center;
  gap: 8px;
  height: 100%;
  margin-left: auto;
`;

const Clock = styled.time`
  width: 72px;
  color: #fff;
  text-align: center;
  line-height: 17px;
`;

const ShowDesktop = styled.button`
  width: 14px;
  height: 100%;
  margin-left: -8px;
  border: 1px solid #3b4b60;
  background: linear-gradient(135deg, #97a7ba, #4f6178 60%, #8496ad);
`;

const App = () => {
  return (
    <>
      <GlobalStyle />
      <Screen>
        <Desktop>
          <Streaks width="24" height="120" viewBox="0 0 24 120" aria-hidden="true">
            <path d="M0 67Q14 62 24 54" stroke="#bdeefc" strokeWidth="2" fill="none" opacity=".8" />
            <path d="M0 107Q10 98 24 78" stroke="#8fe08c" strokeWidth="2" fill="none" />
          </Streaks>
          <Shortcut href="#" $x={1} $y={8}>
            <ShortcutPicture>
              <ComputerBig />
            </ShortcutPicture>
            My Computer
          </Shortcut>
          <Shortcut href="#" $x={1} $y={112}>
            <ShortcutPicture>
              <Rosette />
            </ShortcutPicture>
            <ShortcutArrow>
              <ShortcutIcon />
            </ShortcutArrow>
            Data Manager
          </Shortcut>
          <Shortcut href="#" $x={1} $y={216}>
            <ShortcutPicture>
              <ChromeIcon size={46} />
            </ShortcutPicture>
            <ShortcutArrow>
              <ShortcutIcon />
            </ShortcutArrow>
            Google
            <br />
            Chrome
          </Shortcut>
          <Shortcut href="#" $x={937} $y={632}>
            <ShortcutPicture>
              <RecycleIcon />
            </ShortcutPicture>
            Recycle Bin
          </Shortcut>

          <Explorer
            x={21}
            y={159}
            canGoBack
            path={["Desktop"]}
            search="Search"
            details={{
              icon: <BlankFileIcon />,
              name: "README.md",
              kind: "MD File",
              modified: "4/24/2022 5:49 PM",
              size: "46.7 KB",
              created: "4/24/2022 5:50 PM",
            }}
          />

          <Window $x={103} $y={124} $w={600} $h={525}>
            <NoteTitle>
              <NotepadIcon />
            </NoteTitle>
            <NoteMenu>File</NoteMenu>
            <NoteText readOnly wrap="off" aria-label="Text" value={noteLines.join("\n")} />
            <NoteScroll>
              <button type="button" aria-label="Scroll left">
                <Svg size={8} box={8}>
                  <path d="M6 0v8L2 4z" fill="#333" />
                </Svg>
              </button>
            </NoteScroll>
          </Window>

          <Explorer
            x={131}
            y={72}
            path={["Local Disk (C:)", "Users", "vm1", "Downloads"]}
            search="Search Downloads"
            rows={files}
            details={{
              icon: <InstallerIcon size={46} />,
              name: "ndp48-x86-x64-allos-enu",
              kind: "Application",
              modified: "4/24/2022 5:53 PM",
              size: "115 MB",
              created: "4/24/2022 5:53 PM",
            }}
          />

          <Dialog $x={284} $y={302} $w={456} $h={125}>
            <DialogTitle $h={24}>
              Extracting
              <Caption only />
            </DialogTitle>
            <ExtractBody>
              <Progress role="progressbar" aria-valuenow={92}>
                <ProgressFill style={{ width: "92%" }} />
              </Progress>
              <span>Preparing</span>
              <CancelButton type="button">Cancel</CancelButton>
            </ExtractBody>
          </Dialog>

          <Dialog $x={321} $y={245} $w={366} $h={179} role="alertdialog">
            <DialogTitle $h={28} $icon>
              <SetupIcon />
              Setup Installer
              <Caption active />
            </DialogTitle>
            <CrashBody>
              <SetupDiscIcon />
              <CrashContent>
                <h1>Setup Installer has stopped working</h1>
                <p>A problem caused the program to stop working correctly. Please close the program.</p>
                <CommandLink type="button">
                  <GreenArrowIcon />
                  Close the program
                </CommandLink>
              </CrashContent>
            </CrashBody>
          </Dialog>

          <Pointer width="28" height="30" viewBox="0 0 28 30" aria-hidden="true">
            <circle cx="17" cy="9" r="6" fill="#a9c4d8" stroke="#3fa9a8" strokeWidth="3" />
            <circle cx="17" cy="9" r="4" fill="none" stroke="#2f7f8c" />
            <path d="M12 6q5-6 10 0" stroke="#a8ecec" strokeWidth="1.500" fill="none" />
            <path d="M1.500 10v16l4-3.500 2.500 6 3-1.300-2.500-5.700H13z" fill="#fff" stroke="#111" />
          </Pointer>
        </Desktop>

        <Taskbar>
          <StartButton type="button" aria-label="Start">
            <StartOrb />
          </StartButton>
          <Tasks>
            <Task type="button" aria-label="Windows Explorer" $open $stack>
              <FolderBig />
            </Task>
            <Task type="button" aria-label="Media Player">
              <PlayerIcon />
            </Task>
            <Task type="button" aria-label="Chrome">
              <ChromeIcon />
            </Task>
            <Task type="button" aria-label="Notepad" $open>
              <NotepadIcon size={34} />
            </Task>
            <Task type="button" aria-label="Extracting" $open $bright>
              <InstallerIcon size={34} disc />
            </Task>
            <Task type="button" aria-label="Setup Installer" $open $alert>
              <SetupIcon size={32} />
            </Task>
          </Tasks>
          <Tray>
            <FlagIcon />
            <WiredIcon />
            <SpeakerIcon />
            <Clock>
              5:54 PM
              <br />
              4/24/2022
            </Clock>
            <ShowDesktop type="button" aria-label="Show desktop" />
          </Tray>
        </Taskbar>
      </Screen>
    </>
  );
};

export default App;
